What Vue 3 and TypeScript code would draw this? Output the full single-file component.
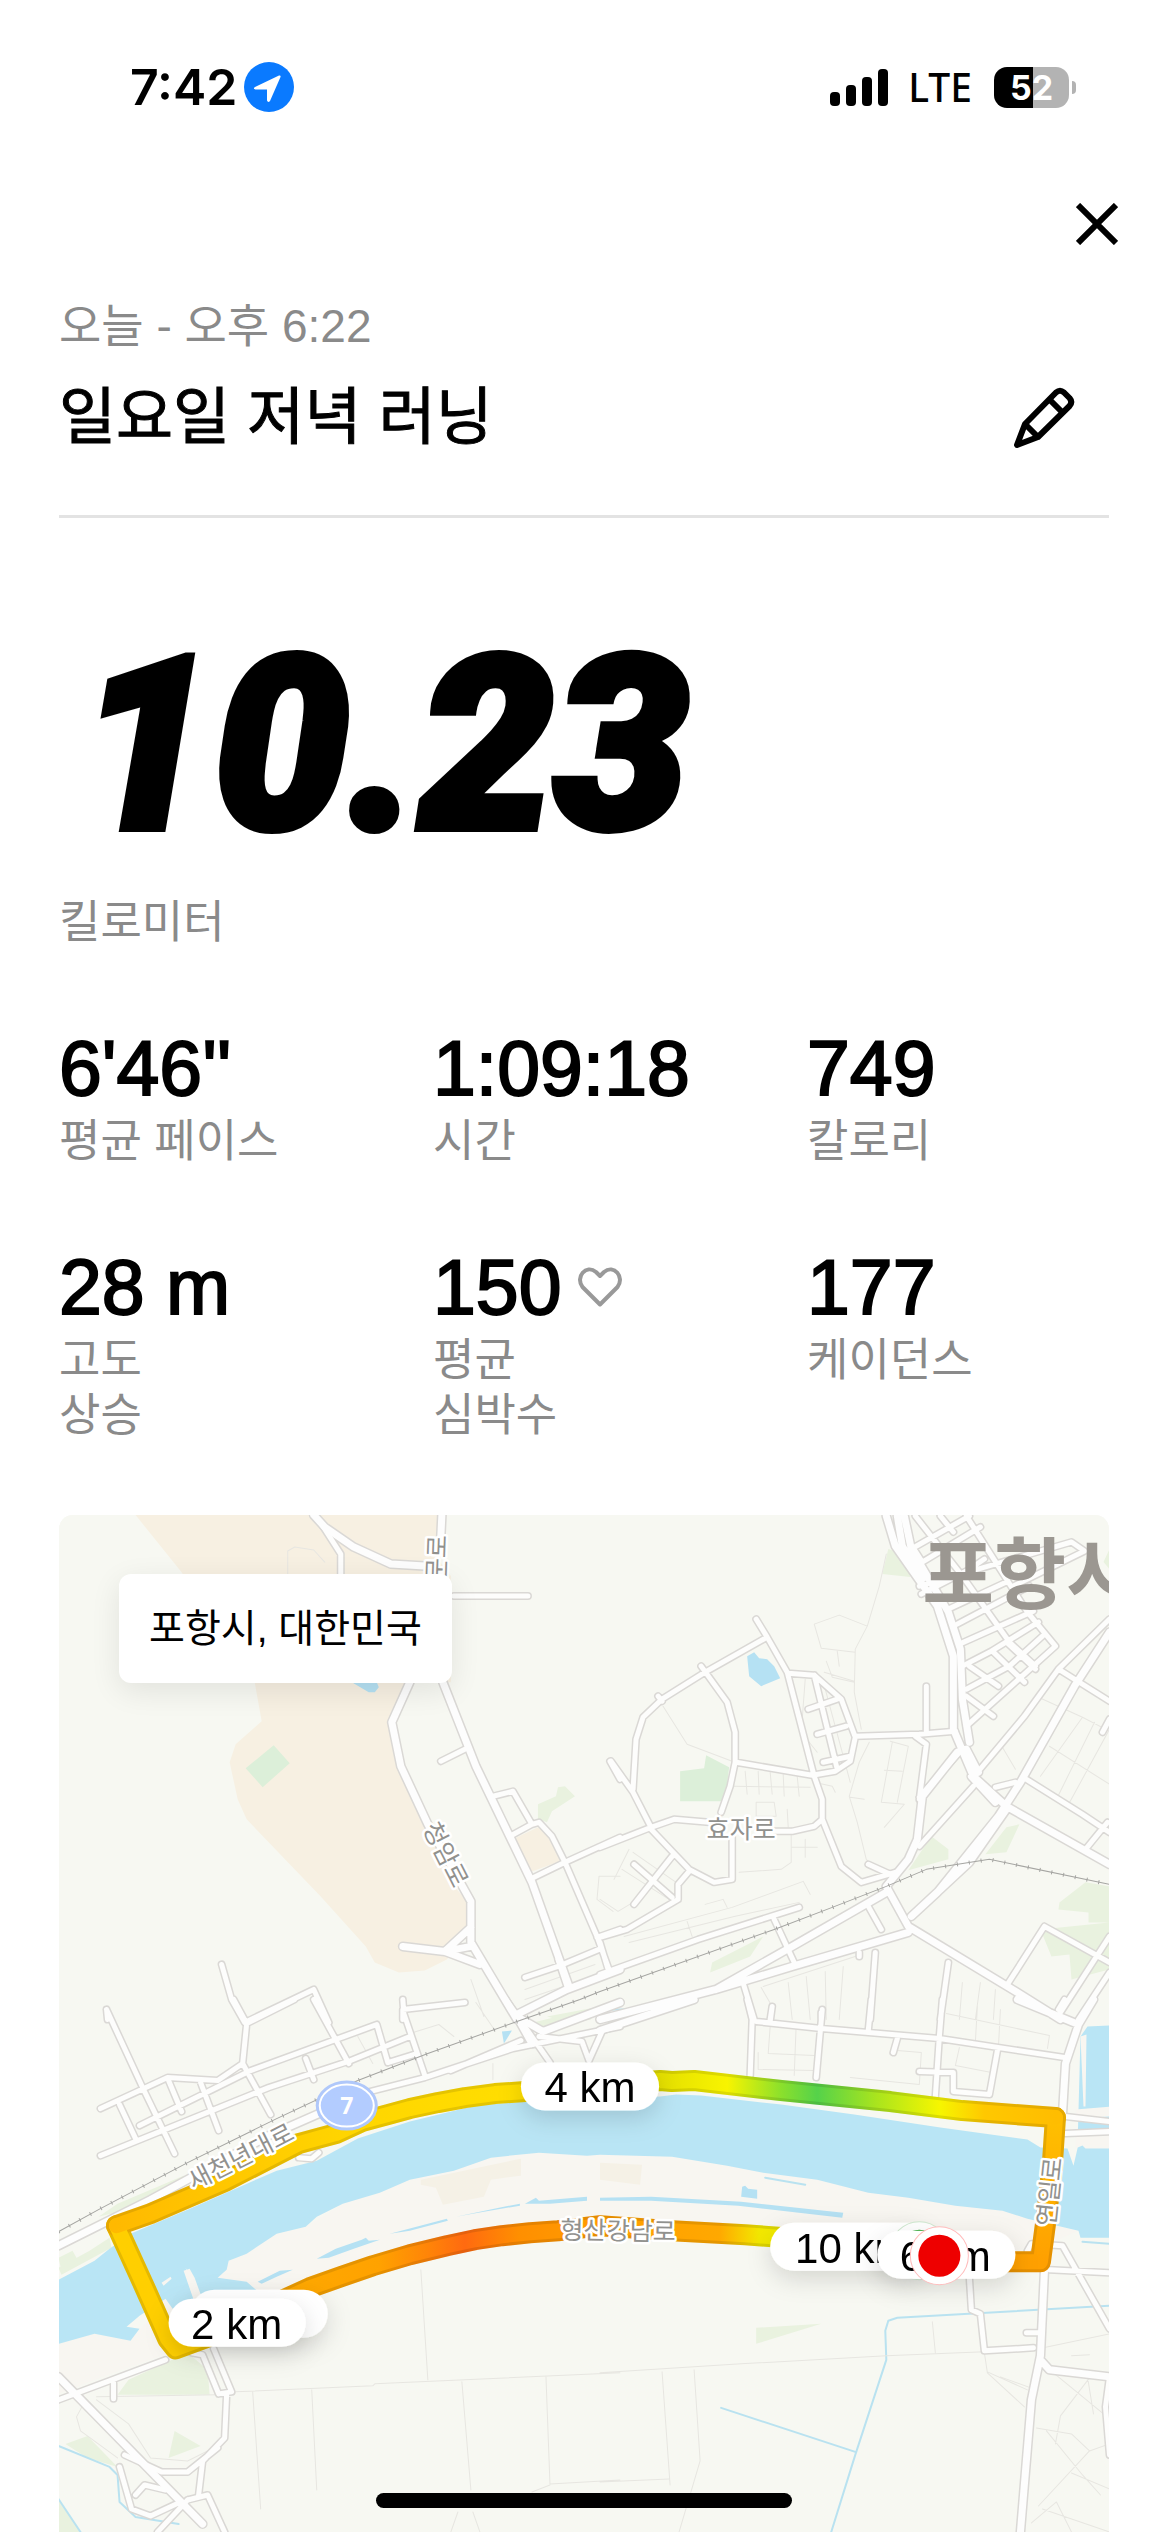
<script setup lang="ts">
type Point = [number, number]
interface Tile { x: number; y: number; sx: number; sy: number }
interface Stat { value: string; label: string; heart?: boolean }
interface Stop { at: number; color: string }

const stats: Stat[] = [
  { value: "6'46''", label: '평균 페이스' },
  { value: '1:09:18', label: '시간' },
  { value: '749', label: '칼로리' },
  { value: '28 m', label: '고도\n상승' },
  { value: '150', label: '평균\n심박수', heart: true },
  { value: '177', label: '케이던스' },
]

const signal: number[] = [14, 21, 29, 37]

/* The map is stored in four survey tiles, each with its own grid. */
const nw: Tile = { x: -19, y: -16, sx: 0.3699, sy: 0.3333 }
const ne: Tile = { x: 541, y: -16, sx: 0.3622, sy: 0.3333 }
const sw: Tile = { x: -19, y: 484, sx: 0.3699, sy: 0.3393 }
const se: Tile = { x: 541, y: 484, sx: 0.3622, sy: 0.3393 }

function project(tile: Tile, coords: string): Point[] {
  return coords.trim().split(/\s+/).map((pair): Point => {
    const [x, y] = pair.split(',').map(Number)
    return [Math.round(tile.x + x * tile.sx), Math.round(tile.y + y * tile.sy)]
  })
}
function line(...parts: Point[][]): string {
  return 'M' + parts.flat().map((p) => p.join(' ')).join('L')
}
function lines(tile: Tile, list: string[]): string {
  return list.map((c) => line(project(tile, c))).join('')
}
function areas(tile: Tile, list: string[]): string {
  return list.map((c) => line(project(tile, c)) + 'Z').join('')
}

const campus =
  areas(nw, [
    '260,47 1085,47 1075,180 1110,230 1110,548 1000,548 948,670 975,800 1050,975 1120,1160 1160,1210 1158,1300 1100,1380 1040,1412 970,1420 905,1390 880,1340 760,1190 560,960 535,900 515,790 530,735 600,665 582,548 500,400 380,215',
    '1280,1020 1345,985 1385,1010 1405,1085 1325,1120',
  ])

const river = line(
  project(sw, '52,825 150,770 190,735 245,690 400,620 640,505 750,475 860,410 1000,360 1180,312 1310,300'),
  project(se, '165,285 210,280 280,283 500,310 700,340 940,378 1180,412 1215,435 1290,440 1305,490 1316,440 1325,110 1345,80 1404,78 1404,700 1325,700 1320,680 1180,645 1110,622 980,607 850,585 740,570 600,530 450,510 350,488 200,462 0,458'),
  project(sw, '1480,460 1350,452 1220,465 1120,505 1000,530 920,570 820,600 750,640 720,670 640,690 560,750 510,770 505,795 480,820 560,830 600,870 440,880 395,790 420,880 360,910 340,880 270,930 235,965 270,970 245,1005 150,985 52,1015'),
) + 'Z'

const shore = line(
  project(sw, '52,1015 150,985 245,1005 340,880 420,860 600,870 480,820 510,770 640,690 720,670 820,600 1000,530 1220,465 1350,452'),
  project(se, '0,458 200,462 350,488 600,530 850,585 1110,622 1320,680 1240,720 1140,740 760,720 400,690 200,690 0,690'),
  project(sw, '1250,700 1000,760 730,850 450,1000 330,1050 200,1100 52,1160'),
) + 'Z'

const dunes = areas(sw, ['1030,530 1300,470 1300,520 1220,530 1200,580 1090,605 1070,555 1030,545'])
  + areas(se, ['0,480 115,485 110,545 0,530'])

const ponds =
  areas(nw, ['843,548 912,548 916,565 905,580 890,578'])
  + areas(ne, ['407,470 425,458 440,476 462,480 480,500 497,538 445,560 412,530'])
  + areas(sw, [
    '748,763 800,735 870,708 880,700 890,710 920,706 850,735 780,760',
    '945,690 1100,645 1104,650 1000,680',
    '1125,640 1240,612 1297,600 1297,607 1200,625',
    '1310,600 1340,585 1350,592 1480,582 1480,592 1380,600',
    '590,830 650,800 685,797 640,815 600,838',
    '1250,95 1275,92 1255,130',
  ])
  + areas(se, ['392,552 400,548 408,558 433,560 433,586 390,580', '0,583 140,581 390,596 670,628 668,642 380,608 140,592 0,592'])

const causeways = areas(se, ['1312,325 1404,316 1404,345 1312,350', '1312,395 1404,390 1404,440 1340,438 1330,430 1312,440', '1326,110 1343,104 1338,316 1333,316'])
  + areas(sw, ['388,800 405,792 420,820 440,885 415,885', '330,835 355,815 358,822 335,842'])

const parks =
  areas(nw, ['1345,915 1395,890 1400,865 1420,862 1445,892 1385,935 1370,970 1345,960', '1370,1550 1500,1525 1560,1530 1400,1560'])
  + areas(ne, [
    '795,150 840,165 855,235 778,225', '915,1010 960,1050 962,1080 850,1112', '1120,985 1158,975 1120,1060 1062,1064',
    '1340,1150 1404,1160 1404,1270 1348,1270 1346,1240 1265,1230 1268,1210',
    '1215,1290 1404,1270 1404,1410 1300,1440 1295,1365 1245,1372', '310,1390 450,1310 415,1370 305,1420', '1404,150 1390,190 1404,210',
  ])
  + areas(sw, [
    '210,600 390,520 410,540 270,610 160,640', '135,740 190,700 195,730 60,810 52,790', '52,760 90,740 100,760 60,800',
    '240,1120 400,1040 455,1090 460,1165 210,1165', '70,1310 130,1285 210,1375 130,1350', '365,1270 435,1315 350,1350',
    '1310,75 1500,25 1490,60 1350,85', '52,1470 110,1568 52,1568',
  ])
  + areas(se, ['432,966 610,955 432,1015'])

const lawns =
  areas(nw, ['558,808 632,738 675,792 602,865'])
  + areas(ne, ['221,815 288,808 292,768 357,805 345,905 221,905'])

const streams =
  lines(se, ['1404,902 820,936 795,945 788,975 790,1060 705,1340 638,1568', '335,1203 705,1332', '455,525 565,545', '1330,712 1404,718'])
  + lines(sw, ['52,1315 190,1375 210,1400 215,1480 260,1525 375,1545', '52,1470 110,1568'])
  + lines(ne, ['0,1530 90,1530'])

const paths =
  lines(ne, [
    '175,620 240,735 365,785 470,800', '790,165 770,260 738,380 705,450 700,580 720,690', '590,375 660,348 738,380',
    '590,375 610,448 705,458', '625,485 640,535 700,550', '655,455 660,500', '618,518 700,545',
    '742,730 715,790 688,890 710,970 735,1080 760,1110', '690,893 730,900', '805,730 775,910 840,916 785,985',
    '800,725 850,740 820,910', '785,812 835,815', '400,815 405,885', '435,815 440,885', '470,820 475,885', '505,825 508,890', '545,830 550,890', '370,860 580,865',
    '430,910 480,910 485,950 430,950 430,910', '515,930 518,985', '530,1045 600,1045', '565,1020 567,1075', '528,1000 528,1090 500,1110 385,1118',
    '1210,595 1330,655 1404,695', '1240,740 1404,855', '1330,655 1215,830', '1365,670 1260,900', '1404,690 1290,920',
    '1110,745 1145,810', '65,1310 365,1225 560,1145 580,1185', '80,1330 370,1250 550,1210', '290,1215 340,1200 350,1225', '240,1265 255,1310',
    '450,1460 720,1365', '445,1465 475,1520', '520,1450 530,1560', '570,1430 580,1560', '620,1415 625,1560', '670,1400 660,1560', '1000,1450 990,1560', '1050,1450 1035,1560', '1090,1470 1085,1560',
    '0,1200 50,1235 90,1210', '40,1140 80,1050', '60,1110 190,1200', '90,1060 210,1150',
    '565,540 555,700 600,760', '620,570 690,850', '590,850 640,860 650,880',
  ])
  + lines(nw, ['670,225 670,155 690,143 740,152 770,190', '1310,1470 1500,1395', '1310,1500 1510,1425', '1165,1440 1200,1550', '1510,1130 1505,1200 1550,1235', '1510,1130 1568,1130'])
  + lines(se, [
    '0,1098 390,1072 790,1050 1060,1037', '170,1095 192,1430', '260,1090 275,1360 218,1568', '0,1420 190,1412', '918,950 925,1040',
    '1060,1040 1068,1100 1170,1200', '1105,1110 1205,1150', '1068,1095 1180,1150', '1210,1030 1404,985', '1205,1260 1300,1280 1350,1330 1404,1310', '1230,1270 1330,1400 1380,1460',
    '1255,1310 1270,1225 1350,1115', '1250,1100 1390,1220', '1345,1110 1360,1220', '1210,1490 1350,1330', '1220,1500 1404,1568', '1190,1540 1260,1480 1300,1568', '1300,1395 1404,1440', '1300,1050 1350,1045',
    '470,80 465,160 590,165', '435,155 435,205 590,210', '540,75 535,225', '820,150 885,155 880,250 690,230', '955,40 1240,105 1235,145', '990,140 980,195 1080,215', '1105,30 1100,140', '1040,20 1035,125',
  ])
  + lines(sw, [
    '530,1155 900,1138 905,1132 1568,1098', '575,1155 597,1500', '735,1148 750,1445', '1030,795 1050,1120', '1140,1125 1165,1445', '1368,1110 1380,1425 1568,1415', '1380,1428 1330,1450',
    '155,1170 480,1165', '155,1180 240,1250 300,1350 400,1360 470,1320', '120,1190 100,1230 110,1270 210,1350', '1000,100 1080,75 1120,110', '1180,10 1230,90',
    '1130,1510 1110,1568', '1170,1510 1190,1568', '860,110 900,190', '1225,190 1225,235',
  ])

const streets =
  lines(nw, [
    '765,80 815,165 815,225', '1120,290 1320,290', '1085,785 1150,750', '1225,890 1280,875 1330,975 1270,1010', '1330,975 1350,970 1385,1010 1420,1090 1505,1310 1540,1420',
    '1325,1140 1420,1090 1568,1015', '1400,1400 1510,1350', '1310,1435 1400,1400', '1425,1460 1400,1380', '1505,1315 1568,1290', '1540,785 1568,840',
    '980,1560 980,1530 1150,1510', '493,1395 520,1500 555,1568', '555,1568 740,1470 780,1568', '180,1530 185,1560',
  ])
  + lines(ne, [
    '430,360 460,415 515,520 590,830', '460,415 290,520 170,600 120,655 100,720 90,870', '280,500 350,610 372,700 372,790 360,860 335,940', '160,590 170,605',
    '30,785 90,880 140,985', '375,790 585,828 650,815 690,785 705,715 665,600 590,528 520,522', '590,528 655,810', '575,630 655,600', '600,705 680,680', '615,790 690,770', 
    '705,712 880,705 980,695', '900,560 900,700', '870,710 900,735 880,900', '0,1045 140,985 205,960 300,970', '590,830 612,900 612,960 590,980 530,995 480,995',
    '612,960 665,1100 720,1150 815,1120', '140,990 245,1110 315,1150 365,1140 365,1010', '245,1115 215,1155 215,1200 75,1290 0,1315', '95,1095 200,1195', '95,1215 200,1070',
    '0,1425 270,1320 550,1225', '0,1330 25,1420', '480,1260 535,1390', '740,1220 775,1290', '740,1095 800,1125',
    '975,380 1185,260', '960,330 1120,250', '990,435 1195,335', '885,285 1010,215', '1000,500 1080,455 1210,370', '1010,570 1130,500 1220,410', '1010,590 1085,650', '1020,500 1100,560', '1085,460 1170,550', '1120,430 1200,510', '1010,680 1255,440 1180,340',
    '1010,50 1180,340', '870,50 1000,230 1130,430 1200,500', '940,50 975,100', '860,150 1020,50', '870,155 890,190 1050,85', '880,260 1300,130 1335,155 1140,260', '1060,180 1000,225',
    '1404,360 1265,510 1170,650 1045,815', '1265,510 1404,605', '1404,660 1385,700', '1175,840 1330,945 1404,1000', '1400,970 1340,1050', '1090,865 1145,850',
    '990,760 880,895', '1030,860 880,1040', '1404,1310 1270,1540', '1225,1280 1125,1455', '1225,1280 1404,1390', '1404,1420 1320,1560', '960,1390 940,1560', '760,1360 745,1560', '715,1360 715,1370', '390,1430 425,1560', '610,1540 610,1560', '475,1520 470,1560',
  ])
  + lines(sw, [
    '180,30 280,265 365,455', '165,320 345,230 480,240 550,190', '215,310 260,410', '350,240 385,330', '435,245 485,385', '165,460 620,260 840,180 1000,110', '270,370 570,210 910,75 940,185 1020,160',
    '720,175 740,235', '525,0 560,70 550,190 625,340', '560,70 690,0', '740,0 835,190', '980,0 985,40 1040,225', '880,275 1040,230 1280,145 1568,80', '1110,210 1300,120', '1260,0 1380,185', '1350,110 1465,125 1485,180', '1485,180 1520,95',
    '200,1175 200,1130', '52,1180 340,1060', '410,1040 440,1045 485,1160 520,1155 470,1030', '700,465 735,470 755,450',
    '505,1160 500,1290 440,1360 430,1460', '400,1475 455,1460 500,1568', '320,1568 400,1475', '215,1375 250,1500 300,1520 380,1480', '230,1340 330,1390 400,1390 480,1320', '260,1460 285,1430 340,1445',
  ])
  + lines(se, [
    '405,0 420,60 415,225', '430,65 610,85 935,115 1280,170', '475,20 470,65', '612,30 595,230', '748,0 740,90', '945,0 935,110 925,285', '820,115 810,155', '880,213 975,215 975,270 1075,280 1095,150',
    '1280,0 1265,30', '1285,345 1404,360', '1285,395 1404,390', '1020,820 1025,915 1050,925 1060,1035 1195,1025', '1180,740 1190,720 1275,725 1404,970', '1240,795 1404,805', '1175,980 1210,980', '1404,1110 1395,1200 1404,1340',
  ])

const avenues =
  lines(nw, [
    '1088,47 1085,110', '740,47 770,85 850,145 950,195 1040,200', '1000,548 952,670 975,800 1050,975 1165,1205 1165,1330 1290,1560', '1090,548 1180,800 1330,1150 1430,1460', '980,1342 1095,1355 1165,1340', '1095,1355 1165,1285', '1095,1355 1190,1395',
    '1290,1545 1425,1470 1568,1410',
  ])
  + lines(ne, [
    '790,50 815,140 930,320 975,470 975,690 1030,830 1120,920', '840,50 860,150 960,340 995,450 1000,600 1020,730', '820,50 835,140 890,240',
    '1404,400 1310,560 1160,850 1100,950 930,1180 860,1250', '1120,920 1404,1095', '1090,910 1025,830', '1120,930 1020,1090 860,1250', '985,760 890,890 875,1020 850,1080 790,1160 850,1280 1150,1480 1270,1560', '1010,750 1045,820',
    '0,1560 320,1470 530,1400 850,1300', '320,1470 530,1340 790,1180',
  ])
  + lines(sw, ['52,1110 440,1545', '52,725 300,590 620,400 860,285', '1290,50 1330,130', '1568,10 1360,95 1290,50'])
  + lines(se, ['0,90 260,0', '1150,0 1320,75 1360,0', '1320,75 1285,190 1275,340', '1225,800 1215,1050 1190,1180 1160,1568', '1215,1060 1240,1090 1404,1110'])

const railway = line(
  project(sw, '52,685 160,620 400,480 640,350 860,240 1050,160 1290,65 1460,0'),
  project(ne, '0,1475 480,1290 640,1225 790,1160 900,1110 1075,1080 1404,1156'),
)

const north = line(
  project(sw, '207,665 300,632 500,535 700,425 760,406 800,395 870,360 940,338 1000,322 1075,303 1150,288 1230,277 1310,270'),
  project(se, '165,240 200,243 260,240 500,268 800,302 1000,328 1255,348'),
)
const west = line(project(sw, '207,665 280,840 345,1000 368,1030 450,995'))
const east = line(project(se, '1255,348 1248,480 1230,640 1215,772 1120,772'))
const south = line(
  project(sw, '600,915 730,850 815,815 900,785 1000,752 1100,725 1175,708 1250,695 1325,687 1400,682'),
  project(se, '0,665 200,680 400,692 510,702'),
)

const northStops: Stop[] = [
  { at: 57, color: '#ffb900' }, { at: 200, color: '#ffcb00' }, { at: 300, color: '#ffd600' }, { at: 460, color: '#ffde00' },
  { at: 600, color: '#e4df00' }, { at: 668, color: '#f8f400' }, { at: 722, color: '#8be02c' }, { at: 758, color: '#55d24a' },
  { at: 816, color: '#a8e41e' }, { at: 880, color: '#f6f600' }, { at: 925, color: '#ffc800' }, { at: 996, color: '#ffbd00' },
]
const southStops: Stop[] = [
  { at: 200, color: '#ffab00' }, { at: 320, color: '#ffa200' }, { at: 370, color: '#ff8408' }, { at: 406, color: '#ff6a10' },
  { at: 460, color: '#ff8f00' }, { at: 560, color: '#ff9f00' }, { at: 660, color: '#ffa800' }, { at: 700, color: '#f3e800' }, { at: 740, color: '#f3f000' },
]
const offset = (stops: Stop[], at: number): number =>
  (at - stops[0].at) / (stops[stops.length - 1].at - stops[0].at)

const route = [
  { d: south, paint: 'url(#pace-south)' },
  { d: east, paint: 'url(#pace-east)' },
  { d: west, paint: '#ffcf00' },
  { d: north, paint: 'url(#pace-north)' },
]
</script>

<template>
  <main class="screen">
    <header class="status">
      <div class="clock">
        <time>7:42</time>
        <svg class="locate" viewBox="0 0 52 52" aria-hidden="true">
          <circle cx="26" cy="26" r="25" fill="#0a7aff" />
          <path d="M12 26 36 14.500Q38 14 37.500 16L27 40Q25 42 24 39.500V28.500H12.500Q9.500 28 12 26Z" fill="#fff" />
        </svg>
      </div>
      <div class="radio">
        <span class="bars"><i v-for="h in signal" :key="h" :style="{ height: h + 'px' }"></i></span>
        <span class="lte">LTE</span>
        <span class="battery"><b>52</b></span>
      </div>
    </header>

    <nav class="bar">
      <button type="button" class="icon" aria-label="닫기">
        <svg class="cross" viewBox="0 0 42 42"><path d="M2 2 40 40M40 2 2 40" stroke="#000" stroke-width="6" /></svg>
      </button>
    </nav>

    <section class="summary">
      <p class="date">오늘 - 오후 6:22</p>
      <div class="heading">
        <h1>일요일 저녁 러닝</h1>
        <button type="button" class="icon" aria-label="이름 편집">
          <svg class="pencil" viewBox="0 0 62 62" fill="none" stroke="#000" stroke-width="6" stroke-linejoin="round">
            <path d="M4 58 12 37 43 5.500Q47 2 51 5.500L56.500 11Q60 15 56.500 19L25 50Z" />
            <path d="M36 12 50 26M12 37 25 50" />
          </svg>
        </button>
      </div>
    </section>

    <section class="distance">
      <strong>10.23</strong>
      <p>킬로미터</p>
    </section>

    <dl class="stats">
      <div v-for="s in stats" :key="s.label" class="stat">
        <dd>
          {{ s.value }}
          <svg v-if="s.heart" class="heart" viewBox="0 0 46 42" aria-hidden="true">
            <path d="M23 38.500 5.500 21C-2 11 9 -2 19 6L23 10 27 6C37 -2 48 11 40.500 21Z" fill="none" stroke="#999" stroke-width="4" stroke-linejoin="round" />
          </svg>
        </dd>
        <dt>{{ s.label }}</dt>
      </div>
    </dl>

    <section class="map">
      <svg class="canvas" viewBox="0 0 1050 1016" preserveAspectRatio="xMidYMin slice" role="img" aria-label="러닝 경로 지도">
        <defs>
          <linearGradient id="pace-north" gradientUnits="userSpaceOnUse" x1="57" y1="0" x2="996" y2="0">
            <stop v-for="s in northStops" :key="s.at" :offset="offset(northStops, s.at)" :stop-color="s.color" />
          </linearGradient>
          <linearGradient id="pace-south" gradientUnits="userSpaceOnUse" x1="200" y1="0" x2="740" y2="0">
            <stop v-for="s in southStops" :key="s.at" :offset="offset(southStops, s.at)" :stop-color="s.color" />
          </linearGradient>
          <linearGradient id="pace-east" gradientUnits="userSpaceOnUse" x1="0" y1="600" x2="0" y2="746">
            <stop offset="0" stop-color="#ffc000" /><stop offset="1" stop-color="#ffa000" />
          </linearGradient>
          <filter id="lift" x="-30%" y="-60%" width="160%" height="260%">
            <feDropShadow dx="0" dy="8" stdDeviation="12" flood-color="#000" flood-opacity=".14" />
          </filter>
        </defs>

        <rect width="1050" height="1016" fill="#f7f8f2" />
        <path :d="campus" fill="#f7f0e2" />
        <path :d="shore" fill="#f8f6f1" />
        <path :d="dunes" fill="#f5f1e6" />
        <path :d="parks" fill="#e9f2df" />
        <path :d="lawns" fill="#dcefd9" />
        <path :d="river" fill="#b9e5f5" />
        <path :d="causeways" fill="#f8f6f1" />
        <path :d="ponds" fill="#b5e1f3" />
        <path :d="streams" class="way" stroke="#b9e2f0" stroke-width="2" />
        <path :d="paths" class="way" stroke="#e7e6e1" stroke-width="1" />
        <path :d="streets" class="way" stroke="#dad8d5" stroke-width="8" />
        <path :d="avenues" class="way" stroke="#dad8d5" stroke-width="10" />
        <path :d="streets" class="way" stroke="#fdfdfc" stroke-width="5" />
        <path :d="avenues" class="way" stroke="#fdfdfd" stroke-width="7" />
        <path :d="railway" class="way" stroke="#a5a5a2" stroke-width="1" />
        <path :d="railway" class="way ties" stroke="#a5a5a2" stroke-width="4" stroke-dasharray="1 11" />

        <text class="city" x="863" y="88">포항시</text>

        <g class="way">
          <g v-for="leg in route" :key="leg.d">
            <path :d="leg.d" :stroke="leg.paint" stroke-width="21" />
            <path :d="leg.d" stroke="#000" stroke-opacity=".1" stroke-width="21" />
          </g>
          <path v-for="leg in route" :key="leg.paint" :d="leg.d" :stroke="leg.paint" stroke-width="15" />
        </g>

        <g class="road">
          <text x="682" y="323">효자로</text>
          <text transform="translate(387 339) rotate(63)" y="9">청암로</text>
          <text transform="translate(378 43) rotate(-88)" y="9">문로</text>
          <text transform="translate(182 641) rotate(-27)" y="9">새천년대로</text>
          <text transform="translate(559 715) rotate(1)" y="9">형산강남로</text>
          <text transform="translate(990 676) rotate(-84)" y="9">연일로</text>
        </g>

        <g class="shield">
          <ellipse cx="288" cy="590" rx="31" ry="25" fill="#b0c8fa" />
          <ellipse cx="288" cy="590" rx="27" ry="21" fill="#b3ccff" stroke="#fff" stroke-width="2" />
          <text x="288" y="598">7</text>
        </g>

        <g class="pill">
          <g filter="url(#lift)"><rect x="462" y="547" width="138" height="48" rx="24" /><text x="531" y="586">4 km</text></g>
          <g filter="url(#lift)"><rect x="132" y="774" width="137" height="48" rx="24" /></g>
          <g filter="url(#lift)"><rect x="110" y="783" width="137" height="48" rx="24" /><text x="178" y="823">2 km</text></g>
          <g filter="url(#lift)"><rect x="711" y="707" width="162" height="48" rx="24" /><text x="793" y="747">10 km</text></g>
          <circle cx="860" cy="735" r="29" stroke="#cfe8cf" stroke-width="1" />
          <circle class="start" cx="860" cy="735" r="21" />
          <g filter="url(#lift)"><rect x="818" y="715" width="138" height="48" rx="24" /><text x="886" y="755">6 km</text></g>
          <circle cx="880" cy="740" r="29" stroke="#fbb" stroke-width="1" />
          <circle class="finish" cx="880" cy="740" r="21" />
        </g>
      </svg>
      <p class="place">포항시, 대한민국</p>
    </section>
    <div class="home"></div>
  </main>
</template>

<style>
body { background: #fff; }
</style>

<style scoped>
.screen {
  box-sizing: border-box;
  display: flex;
  flex-direction: column;
  min-height: 100vh;
  position: relative;
  color: #000;
  font-family: "Liberation Sans", "Noto Sans CJK KR", sans-serif;
}
p, h1, dl, dd, dt { margin: 0; }
.status {
  display: flex;
  align-items: center;
  justify-content: space-between;
  height: 174px;
  padding: 0 92px 0 130px;
}
.clock, .radio { display: flex; align-items: center; }
.clock { gap: 5px; }
.clock time { font: 600 50px/60px Inter, sans-serif; }
.locate { width: 52px; height: 52px; }
.bars { display: flex; align-items: flex-end; gap: 6px; height: 37px; }
.bars i { width: 10px; border-radius: 4px; background: #000; }
.lte { margin: 0 22px 0 20px; font: 500 39px/48px "Noto Sans", sans-serif; }
.battery {
  position: relative;
  display: flex;
  align-items: center;
  justify-content: center;
  width: 75px;
  height: 41px;
  margin-right: 7px;
  border-radius: 13px;
  background: linear-gradient(90deg, #000 52%, #b3b3b3 52%);
  color: #fff;
}
.battery b { font: 700 34px/41px Inter, sans-serif; }
.battery::after {
  content: "";
  position: absolute;
  left: 78px;
  top: 14px;
  width: 4px;
  height: 13px;
  border-radius: 0 4px 4px 0;
  background: #b3b3b3;
}
.bar {
  display: flex;
  align-items: center;
  justify-content: flex-end;
  height: 100px;
  padding-right: 50px;
}
.icon {
  display: flex;
  padding: 0;
  border: 0;
  background: none;
}
.cross { width: 42px; height: 42px; }
.pencil { width: 62px; height: 62px; }
.summary {
  margin: 24px 59px 0;
  padding-bottom: 57px;
  border-bottom: 3px solid #e3e3e3;
}
.date { color: #8a8a8a; font-size: 46px; line-height: 56px; }
.heading {
  display: flex;
  align-items: center;
  justify-content: space-between;
  height: 80px;
  margin-top: 24px;
  padding-right: 34px;
}
h1 { font-size: 62px; font-weight: 400; line-height: 80px; -webkit-text-stroke: 1px #000; }
.distance { margin: 128px 59px 0; }
.distance strong {
  display: block;
  padding-left: 20px;
  font: italic 900 240px/200px Roboto, sans-serif;
  -webkit-text-stroke: 8px #000;
}
.distance p, dt { color: #8a8a8a; font-size: 45px; line-height: 55px; }
.distance p { margin-top: 49px; }
.stats {
  display: grid;
  grid-template-columns: repeat(3, 1fr);
  gap: 78px 72px;
  margin: 78px 59px 0;
}
.stat { display: flex; flex-direction: column; gap: 6px; }
dd {
  display: flex;
  align-items: center;
  gap: 16px;
  font-size: 77px;
  line-height: 80px;
  white-space: nowrap;
  -webkit-text-stroke: 2px #000;
}
dt { white-space: pre-line; }
.heart { width: 46px; height: 42px; }
.map {
  position: relative;
  flex: 1;
  min-height: 600px;
  margin: 72px 59px 0;
  border-radius: 14px 14px 0 0;
  overflow: hidden;
  background: #f7f8f2;
}
.canvas { position: absolute; inset: 0; width: 100%; height: 100%; }
.way { fill: none; stroke-linejoin: round; stroke-linecap: round; }
.ties { stroke-linecap: butt; }
.city { font-size: 78px; font-weight: 700; fill: #9b9791; }
.road text {
  font-size: 25px;
  text-anchor: middle;
  fill: #91918e;
  stroke: #fff;
  stroke-width: 5px;
  stroke-linejoin: round;
  paint-order: stroke;
}
.shield text { font: 700 23px "Noto Sans", sans-serif; text-anchor: middle; fill: #fff; }
.pill rect, .pill circle { fill: #fff; }
.pill text { font-size: 42px; text-anchor: middle; fill: #000; }
.pill .start { fill: #159a1a; }
.pill .finish { fill: #ee0000; }
.place {
  position: absolute;
  left: 60px;
  top: 59px;
  padding: 1px 30px 0;
  border-radius: 12px;
  background: #fff;
  box-shadow: 0 8px 30px rgba(0, 0, 0, 0.09);
  font-size: 39px;
  line-height: 108px;
}
.home {
  position: absolute;
  left: 50%;
  bottom: 24px;
  width: 416px;
  height: 15px;
  margin-left: -208px;
  border-radius: 8px;
  background: #000;
}
</style>
